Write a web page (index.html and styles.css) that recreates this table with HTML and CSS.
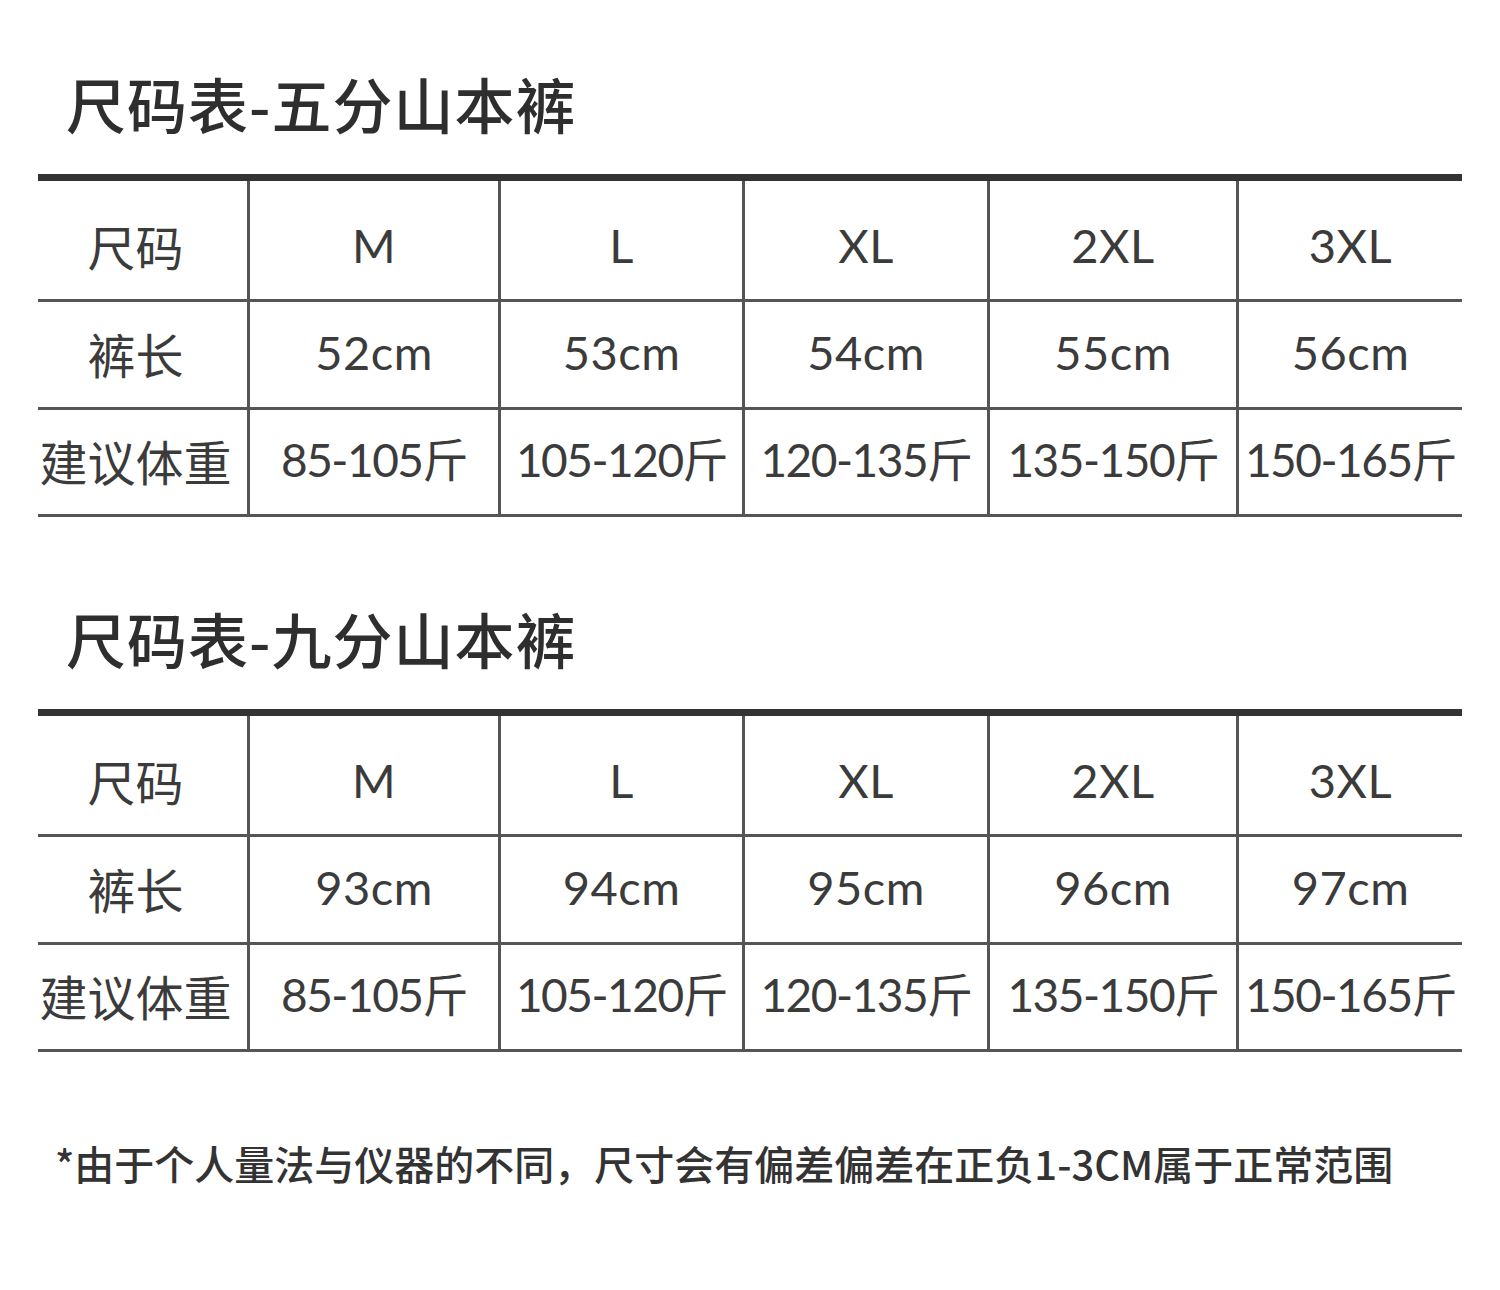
FILE: index.html
```html
<!DOCTYPE html>
<html lang="zh-CN">
<head>
<meta charset="utf-8">
<title>尺码表</title>
<link rel="stylesheet" href="styles.css">
</head>
<body>
<div class="page">
  <section class="section">
    <h2 class="title">尺码表-五分山本裤</h2>
    <div class="table">
      <div class="row head">
        <div class="cell first">尺码</div><div class="cell">M</div><div class="cell">L</div><div class="cell">XL</div><div class="cell">2XL</div><div class="cell">3XL</div>
      </div>
      <div class="row mid">
        <div class="cell first">裤长</div><div class="cell">52cm</div><div class="cell">53cm</div><div class="cell">54cm</div><div class="cell">55cm</div><div class="cell">56cm</div>
      </div>
      <div class="row last">
        <div class="cell first">建议体重</div><div class="cell">85-105斤</div><div class="cell">105-120斤</div><div class="cell">120-135斤</div><div class="cell">135-150斤</div><div class="cell">150-165斤</div>
      </div>
    </div>
  </section>
  <section class="section second">
    <h2 class="title">尺码表-九分山本裤</h2>
    <div class="table">
      <div class="row head">
        <div class="cell first">尺码</div><div class="cell">M</div><div class="cell">L</div><div class="cell">XL</div><div class="cell">2XL</div><div class="cell">3XL</div>
      </div>
      <div class="row mid">
        <div class="cell first">裤长</div><div class="cell">93cm</div><div class="cell">94cm</div><div class="cell">95cm</div><div class="cell">96cm</div><div class="cell">97cm</div>
      </div>
      <div class="row last">
        <div class="cell first">建议体重</div><div class="cell">85-105斤</div><div class="cell">105-120斤</div><div class="cell">120-135斤</div><div class="cell">135-150斤</div><div class="cell">150-165斤</div>
      </div>
    </div>
  </section>
  <p class="note">*由于个人量法与仪器的不同，尺寸会有偏差偏差在正负1-3CM属于正常范围</p>
</div>
</body>
</html>
```

FILE: styles.css
```css
html, body {
  margin: 0;
  padding: 0;
  background: #ffffff;
}
body {
  font-family: "Lato", "Noto Sans CJK SC", sans-serif;
  color: #3b3b3b;
}
.page {
  padding: 66px 38px 0 38px;
}
.section.second {
  margin-top: 84px;
}
.title {
  margin: 0 0 34px 28px;
  height: 74px;
  line-height: 74px;
  font-family: "Noto Sans CJK SC", sans-serif;
  font-size: 60px;
  font-weight: 500;
  color: #2e2e2e;
  letter-spacing: 1px;
}
.table {
  width: 1424px;
  border-top: 7px solid #333333;
}
.row {
  display: grid;
  grid-template-columns: 209px 251px 244px 245px 249px 226px;
  border-bottom: 3px solid #555555;
}
.row.head { height: 118px; }
.row.mid { height: 105px; }
.row.last { height: 104px; }
.cell {
  display: flex;
  align-items: center;
  justify-content: center;
  border-left: 3px solid #555555;
  font-size: 47px;
  font-weight: 400;
  letter-spacing: 0.5px;
  white-space: nowrap;
  line-height: 1;
  padding-bottom: 4px;
}
.row.last .cell {
  font-size: 46px;
  letter-spacing: -1.5px;
}
.row .cell.first {
  border-left: none;
  font-family: "Noto Sans CJK SC", sans-serif;
  font-size: 48px;
  letter-spacing: 0;
  padding-right: 14px;
}
.row.head .cell {
  padding-top: 10px;
  padding-bottom: 0;
}
.note {
  margin: 86px 0 0 17px;
  height: 50px;
  line-height: 50px;
  font-family: "Noto Sans CJK SC", sans-serif;
  font-size: 40px;
  font-weight: 500;
  color: #333333;
  letter-spacing: 0;
  white-space: nowrap;
}
```
